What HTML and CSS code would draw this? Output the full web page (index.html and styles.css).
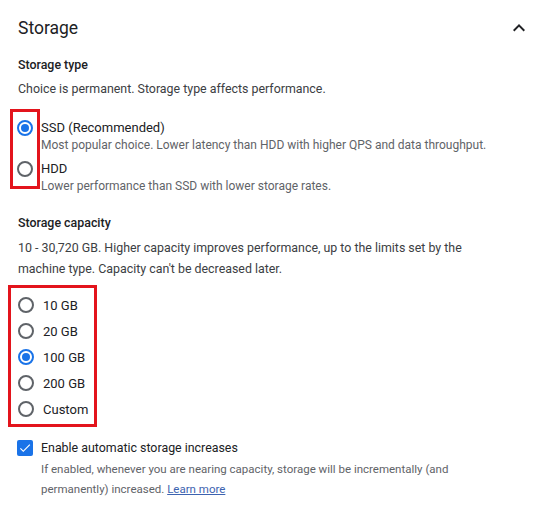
FILE: index.html
```html
<!DOCTYPE html>
<html>
<head>
<meta charset="utf-8">
<link rel="stylesheet" href="styles.css">
</head>
<body>
<div class="panel">
  <div class="header">
    <h2 class="title">Storage</h2>
    <svg class="chevron" width="24" height="24" viewBox="0 0 24 24"><path d="M7.41 15.41 12 10.83l4.59 4.58L18 14l-6-6-6 6z" fill="#202124"/></svg>
  </div>

  <h3 class="label">Storage type</h3>
  <p class="text">Choice is permanent. Storage type affects performance.</p>

  <div class="type-group">
    <div class="hl hl-type"></div>
    <div class="option">
      <span class="radio checked"></span>
      <div class="opt-body">
        <div class="opt-label">SSD (Recommended)</div>
        <div class="opt-desc">Most popular choice. Lower latency than HDD with higher QPS and data throughput.</div>
      </div>
    </div>
    <div class="option">
      <span class="radio"></span>
      <div class="opt-body">
        <div class="opt-label">HDD</div>
        <div class="opt-desc">Lower performance than SSD with lower storage rates.</div>
      </div>
    </div>
  </div>

  <h3 class="label cap-label">Storage capacity</h3>
  <p class="text para">10 - 30,720 GB. Higher capacity improves performance, up to the limits set by the machine type. Capacity can't be decreased later.</p>

  <div class="cap-group">
    <div class="cap-option"><span class="radio"></span><span class="cap-label-text">10 GB</span></div>
    <div class="cap-option"><span class="radio"></span><span class="cap-label-text">20 GB</span></div>
    <div class="cap-option"><span class="radio checked"></span><span class="cap-label-text">100 GB</span></div>
    <div class="cap-option"><span class="radio"></span><span class="cap-label-text">200 GB</span></div>
    <div class="cap-option"><span class="radio"></span><span class="cap-label-text">Custom</span></div>
  </div>

  <div class="check-row">
    <span class="checkbox"><svg width="14" height="14" viewBox="0 0 24 24"><path d="M9 16.17 4.83 12l-1.42 1.41L9 19 21 7l-1.41-1.41z" fill="#fff"/></svg></span>
    <div class="opt-body">
      <div class="check-label">Enable automatic storage increases</div>
      <div class="check-desc">If enabled, whenever you are nearing capacity, storage will be incrementally (and permanently) increased. <a class="link" href="#">Learn more</a></div>
    </div>
  </div>
</div>
</body>
</html>
```

FILE: styles.css
```css
* { box-sizing: border-box; }
html, body { margin: 0; padding: 0; background: #fff; }
body {
  font-family: Roboto, "Liberation Sans", Arial, sans-serif;
  color: #202124;
  width: 544px;
  height: 518px;
  overflow: hidden;
}
.panel { padding: 14px 0 0 18px; }
.header {
  display: flex;
  align-items: center;
  justify-content: space-between;
  padding-right: 13px;
  height: 28px;
}
.title { margin: 0; font-size: 17.5px; font-weight: 400; }
.chevron { display: block; }
.label { margin: 13px 0 0; font-size: 12.4px; font-weight: 500; line-height: 20px; }
.text { margin: 4px 0 0; font-size: 12.4px; line-height: 20px; color: #3c4043; }
.type-group {
  position: relative;
  margin-top: 20px;
  display: flex;
  flex-direction: column;
  gap: 6px;
}
.hl {
  position: absolute;
  border: 3px solid #e3141c;
}
.hl-type { left: -8px; top: -10px; width: 30px; height: 80px; }
.option { display: flex; align-items: flex-start; }
.radio {
  flex: none;
  width: 16px;
  height: 16px;
  border: 2px solid #5f6368;
  border-radius: 50%;
  position: relative;
  background: #fff;
}
.radio.checked { border-color: #1a73e8; }
.radio.checked::after {
  content: "";
  position: absolute;
  left: 2px; top: 2px;
  width: 8px; height: 8px;
  border-radius: 50%;
  background: #1a73e8;
}
.option .radio { margin-top: 1px; margin-left: -1px; }
.opt-body { margin-left: 8px; }
.opt-label { font-size: 13px; line-height: 18px; }
.opt-desc { font-size: 12px; line-height: 17px; color: #5f6368; }
.cap-label { margin-top: 18px; }
.para { line-height: 21px; width: 475px; }
.cap-group {
  margin: 6px 0 0 -10px;
  width: 89px;
  border: 3px solid #e3141c;
  padding: 4px 0 2px 7px;
  display: flex;
  flex-direction: column;
}
.cap-option { display: flex; align-items: center; height: 26px; }
.cap-label-text { margin-left: 9px; font-size: 13px; }
.check-row { display: flex; align-items: flex-start; margin-top: 12px; }
.checkbox {
  flex: none;
  width: 16px; height: 16px;
  margin-top: 1px;
  margin-left: -1px;
  border-radius: 2px;
  background: #1a73e8;
  display: flex; align-items: center; justify-content: center;
}
.check-label { font-size: 12.4px; line-height: 18px; }
.check-desc { font-size: 11.5px; line-height: 20px; margin-top: 2px; width: 440px; color: #5f6368; }
.link { color: #3d63b0; text-decoration: underline; }
```
